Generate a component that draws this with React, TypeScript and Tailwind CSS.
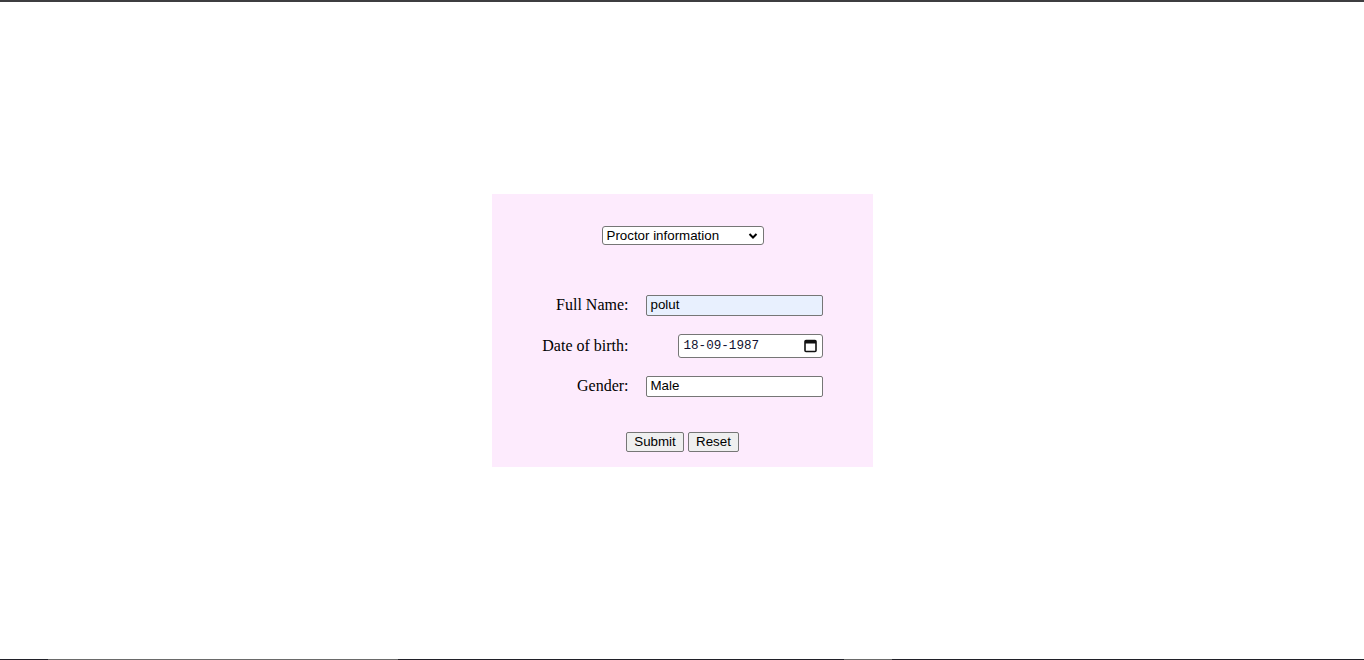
import React from "react";

export default function App() {
  const sans = { fontFamily: '"Liberation Sans", Arial, sans-serif' };
  return (
    <div className="flex h-[660px] w-full flex-col bg-white">
      <div className="h-[2px] w-full bg-[#3e3e40]" />
      <div className="flex flex-1 items-center justify-center">
        <div className="flex h-[273px] w-[381px] flex-col bg-[#fdebfd]">
          {/* select */}
          <div className="mt-[32px] flex justify-center pl-[1px]">
            <div
              className="flex h-[19px] w-[162px] items-center justify-between rounded-[3px] border border-[#767676] bg-white pl-[4px] pr-[5px] text-[13.33px] text-black"
              style={sans}
            >
              <span className="leading-none">Proctor information</span>
              <svg width="10" height="8" viewBox="0 0 10 8">
                <path d="M1.5 2 L5 5.5 L8.5 2" fill="none" stroke="#000" strokeWidth="2" />
              </svg>
            </div>
          </div>

          {/* form rows */}
          <div
            className="ml-[37px] mt-[48px] grid grid-cols-[100px_177px] gap-x-[17px] gap-y-[17px] text-[16px] text-black"
            style={{ fontFamily: '"Liberation Serif", "Times New Roman", serif' }}
          >
            <div className="flex h-[24px] items-center justify-end">Full Name:</div>
            <div className="flex h-[24px] items-center justify-end">
              <div
                className="flex h-[21px] w-[177px] items-center rounded-[2px] border border-[#767676] bg-[#e8f0fe] pl-[4px] text-[13.33px] text-black"
                style={sans}
              >
                polut
              </div>
            </div>

            <div className="flex h-[24px] items-center justify-end">Date of birth:</div>
            <div className="flex h-[24px] items-center justify-end">
              <div className="flex h-[24px] w-[145px] items-center justify-between rounded-[3px] border border-[#767676] bg-white pl-[5px] pr-[5px]">
                <span
                  className="text-[12.6px] leading-none text-[#101030]"
                  style={{ fontFamily: '"Liberation Mono", "DejaVu Sans Mono", monospace' }}
                >
                  18-09-1987
                </span>
                <svg width="13" height="14" viewBox="0 0 13 14">
                  <rect x="1" y="1.5" width="11" height="11" rx="1" fill="none" stroke="#111" strokeWidth="1.6" />
                  <rect x="1" y="1.5" width="11" height="3" fill="#111" />
                </svg>
              </div>
            </div>

            <div className="-mt-[1px] flex h-[24px] items-center justify-end">Gender:</div>
            <div className="-mt-[1px] flex h-[24px] items-center justify-end">
              <div
                className="flex h-[21px] w-[177px] items-center rounded-[2px] border border-[#767676] bg-white pl-[4px] text-[13.33px] text-black"
                style={sans}
              >
                Male
              </div>
            </div>
          </div>

          {/* buttons */}
          <div className="mt-[34px] flex justify-center gap-[4px] pl-[1px]" style={sans}>
            <div className="flex h-[20px] w-[58px] items-center justify-center rounded-[2px] border border-[#767676] bg-[#efefef] text-[13.33px] text-black">
              Submit
            </div>
            <div className="flex h-[20px] w-[51px] items-center justify-center rounded-[2px] border border-[#767676] bg-[#efefef] text-[13.33px] text-black">
              Reset
            </div>
          </div>
        </div>
      </div>
      <div className="flex h-[1px] w-full">
        <div className="h-full w-[48px] bg-[#202028]" />
        <div className="h-full w-[350px] bg-[#6a6a6a]" />
        <div className="h-full w-[446px] bg-[#202028]" />
        <div className="h-full w-[48px] bg-[#6a6a6a]" />
        <div className="h-full flex-1 bg-[#202028]" />
      </div>
    </div>
  );
}
